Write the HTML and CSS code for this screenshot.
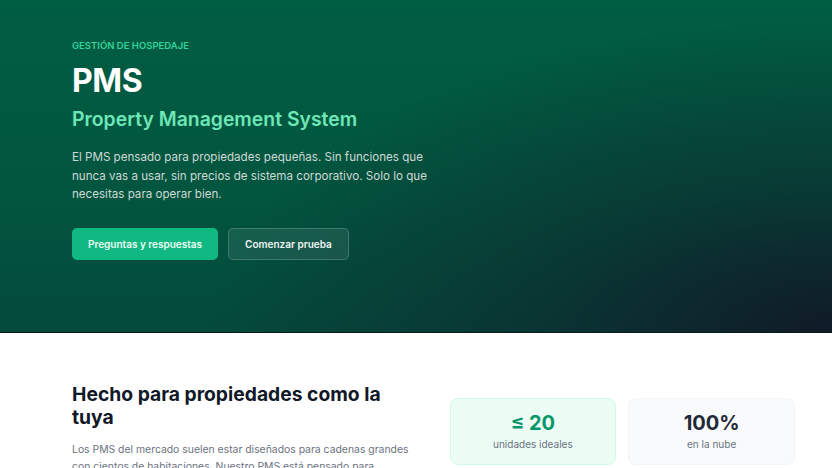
FILE: index.html
```html
<!DOCTYPE html>
<html lang="es">
<head>
<meta charset="utf-8">
<title>PMS</title>
<link rel="stylesheet" href="styles.css">
</head>
<body>
<header class="hero">
  <div class="hero-inner">
    <p class="eyebrow">GESTIÓN DE HOSPEDAJE</p>
    <h1 class="title">PMS</h1>
    <p class="subtitle">Property Management System</p>
    <p class="lead">El PMS pensado para propiedades pequeñas. Sin funciones que nunca vas a usar, sin precios de sistema corporativo. Solo lo que necesitas para operar bien.</p>
    <div class="actions">
      <a class="btn btn-primary" href="#">Preguntas y respuestas</a>
      <a class="btn btn-ghost" href="#">Comenzar prueba</a>
    </div>
  </div>
</header>
<section class="about">
  <div class="about-text">
    <h2 class="about-title">Hecho para propiedades como la tuya</h2>
    <p class="about-body">Los PMS del mercado suelen estar diseñados para cadenas grandes con cientos de habitaciones. Nuestro PMS está pensado para propiedades pequeñas que necesitan lo esencial, sin complicaciones.</p>
  </div>
  <div class="stats">
    <div class="stat stat-green">
      <div class="stat-value">≤ 20</div>
      <div class="stat-label">unidades ideales</div>
    </div>
    <div class="stat stat-gray">
      <div class="stat-value">100%</div>
      <div class="stat-label">en la nube</div>
    </div>
  </div>
</section>
</body>
</html>
```
FILE: styles.css
```css
* { box-sizing: border-box; }
html, body { margin: 0; padding: 0; }
body {
  font-family: Inter, "Noto Sans", "Liberation Sans", sans-serif;
  background: #ffffff;
  color: #111827;
}
p, h1, h2 { margin: 0; }

.hero {
  background:
    radial-gradient(ellipse 75% 95% at 100% 100%, rgba(17, 24, 39, 0.95) 0%, rgba(17, 24, 39, 0.45) 45%, rgba(17, 24, 39, 0) 100%),
    linear-gradient(180deg, #005e43 0%, #02553f 60%, #044a3c 100%);
  border-bottom: 1px solid #0b1a1e;
  padding: 38px 72px 72px;
}
.hero-inner { max-width: 370px; }

.eyebrow {
  font-size: 9.5px;
  line-height: 15px;
  font-weight: 600;
  color: #34d399;
}
.title {
  margin-top: 9px;
  font-size: 32px;
  line-height: 38px;
  font-weight: 700;
  color: #ffffff;
  letter-spacing: -0.4px;
}
.subtitle {
  margin-top: 5px;
  font-size: 19.4px;
  line-height: 28px;
  font-weight: 600;
  color: #6ee7b7;
}
.lead {
  margin-top: 15px;
  font-size: 11.6px;
  line-height: 18.5px;
  color: #cfd8d5;
}
.actions {
  margin-top: 24px;
  display: flex;
  gap: 10px;
}
.btn {
  display: inline-flex;
  align-items: center;
  justify-content: center;
  height: 32px;
  padding: 0 16px;
  border-radius: 5px;
  font-size: 10px;
  font-weight: 600;
  text-decoration: none;
  color: #ffffff;
}
.btn-primary {
  background: #10b981;
  color: #ecfdf5;
}
.btn-ghost {
  background: rgba(255, 255, 255, 0.08);
  border: 1px solid rgba(255, 255, 255, 0.18);
  color: #f3f4f6;
}

.about {
  display: grid;
  grid-template-columns: 1fr 1fr;
  gap: 32px;
  padding: 50px 37px 40px 72px;
}
.about-title {
  font-size: 19.3px;
  line-height: 23px;
  font-weight: 700;
  color: #111827;
  max-width: 330px;
}
.about-body {
  margin-top: 12px;
  font-size: 10.4px;
  line-height: 17px;
  color: #6b7280;
}
.stats {
  display: grid;
  grid-template-columns: 1fr 1fr;
  gap: 12px;
  align-content: start;
  padding-top: 15px;
}
.stat {
  height: 67px;
  border-radius: 8px;
  display: flex;
  flex-direction: column;
  align-items: center;
  justify-content: center;
  gap: 2px;
}
.stat-green {
  background: #ecfdf5;
  border: 1px solid #d1fae5;
}
.stat-gray {
  background: #f9fafb;
  border: 1px solid #f3f4f6;
}
.stat-value {
  font-size: 20px;
  line-height: 24px;
  font-weight: 700;
}
.stat-green .stat-value { color: #059669; }
.stat-gray .stat-value { color: #1f2937; }
.stat-label {
  font-size: 10px;
  line-height: 14px;
  color: #6b7280;
}
```
